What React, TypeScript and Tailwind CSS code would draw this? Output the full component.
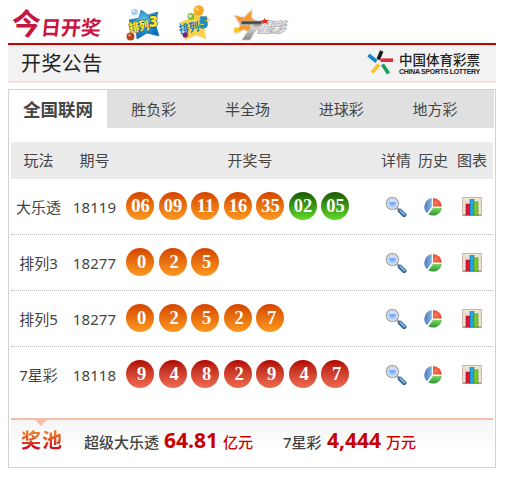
import React from 'react';

interface Draw {
  name: string;
  issue: string;
  balls: string[];
  color: 'orange' | 'red';
  extra?: string[];
}

const tabs = ['胜负彩', '半全场', '进球彩', '地方彩'];

const draws: Draw[] = [
  { name: '大乐透', issue: '18119', balls: ['06', '09', '11', '16', '35'], color: 'orange', extra: ['02', '05'] },
  { name: '排列3', issue: '18277', balls: ['0', '2', '5'], color: 'orange' },
  { name: '排列5', issue: '18277', balls: ['0', '2', '5', '2', '7'], color: 'orange' },
  { name: '7星彩', issue: '18118', balls: ['9', '4', '8', '2', '9', '4', '7'], color: 'red' },
];

const ballColors = {
  orange: 'from-[#d44300] to-[#fb991f]',
  green: 'from-[#1d5a06] to-[#5fdc28]',
  red: 'from-[#b00000] to-[#ef6a50]',
};

const columns = 'grid grid-cols-[55px_57px_254px_38px_36px_42px]';

function Ball({ value, color }: { value: string; color: keyof typeof ballColors }) {
  return (
    <span
      className={`flex h-7 w-7 items-center justify-center rounded-full bg-linear-to-b font-['Liberation_Serif',serif] text-[18.5px] leading-none font-bold text-white ${ballColors[color]} ${value.length === 1 ? 'pl-[3px]' : 'pl-px'}`}
    >
      {value}
    </span>
  );
}

function SearchIcon() {
  return (
    <svg width="22" height="22" viewBox="0 0 22 22">
      <defs>
        <radialGradient id="lens" cx="0.5" cy="0.5" r="0.5">
          <stop offset="0" stopColor="#8fbcff" />
          <stop offset="0.6" stopColor="#a9ccff" />
          <stop offset="1" stopColor="#dceaff" />
        </radialGradient>
      </defs>
      <path d="M11.5 11.5 L14.5 14.5" stroke="#9a9a9a" strokeWidth="2.2" />
      <path d="M15 14.8 L19.2 19" stroke="#2f608f" strokeWidth="4.4" strokeLinecap="round" />
      <path d="M15.2 14.4 L19.3 18.5" stroke="#7fb3e4" strokeWidth="2" strokeLinecap="round" />
      <circle cx="7.4" cy="7.4" r="6" fill="url(#lens)" stroke="#a3a3a3" strokeWidth="1.4" />
      <circle cx="7.4" cy="7.4" r="4.9" fill="none" stroke="#ececec" strokeWidth="0.8" />
      <path d="M4.8 7.6 H10" stroke="#6a9ff7" strokeWidth="1.6" />
      <path d="M5.2 5.2 Q7.5 3.9 9.6 5.2" stroke="#fff" strokeWidth="1" fill="none" />
    </svg>
  );
}

function PieIcon() {
  return (
    <svg width="20" height="20" viewBox="0 0 20 20">
      <defs>
        <linearGradient id="pieBlue" x1="0" y1="0" x2="1" y2="0">
          <stop offset="0" stopColor="#4a80b8" />
          <stop offset="1" stopColor="#86b5e2" />
        </linearGradient>
        <radialGradient id="pieRed" cx="0.3" cy="0.6" r="0.9">
          <stop offset="0" stopColor="#f97b58" />
          <stop offset="1" stopColor="#dd2f0f" />
        </radialGradient>
        <linearGradient id="pieGreen" x1="0" y1="0" x2="0" y2="1">
          <stop offset="0" stopColor="#7ad962" />
          <stop offset="1" stopColor="#2f9435" />
        </linearGradient>
      </defs>
      <path d="M8.8 1 A9 9 0 0 0 4 16.2 L8.8 9.8 Z" fill="url(#pieBlue)" />
      <path d="M10 1 A8.8 8.8 0 0 1 18.8 9.6 L10 9.6 Z" fill="url(#pieRed)" />
      <path d="M9.8 11 L18.8 11 A9 8.5 0 0 1 5.3 17.4 Z" fill="url(#pieGreen)" />
    </svg>
  );
}

function ChartIcon() {
  return (
    <svg width="20" height="19" viewBox="0 0 20 19">
      <rect x="0.5" y="0.5" width="19" height="18" fill="#eee4d5" stroke="#cbbba8" />
      <path d="M1 4.5 H19 M1 7.5 H19 M1 10.5 H19 M1 13.5 H19" stroke="#d9ccb9" strokeWidth="0.6" />
      <path d="M1 18 H19" stroke="#a89a8b" strokeWidth="1.6" />
      <rect x="4" y="7" width="4" height="11" fill="#de1832" stroke="#a20f22" strokeWidth="0.6" />
      <rect x="8" y="2.5" width="4" height="15.5" fill="#27a4dc" stroke="#1379aa" strokeWidth="0.6" />
      <rect x="12" y="5" width="4" height="13" fill="#7ac834" stroke="#4b9718" strokeWidth="0.6" />
    </svg>
  );
}

function Pailie3Logo() {
  return (
    <svg width="34" height="34" viewBox="0 0 34 34">
      <defs>
        <radialGradient id="blueStar" cx="0.5" cy="0.35" r="0.6">
          <stop offset="0" stopColor="#5cc4f2" />
          <stop offset="1" stopColor="#0869b4" />
        </radialGradient>
      </defs>
      <path
        d="M15 2 L22 7 L32 4 L29 15 L33 28 L21 25 L11 31 L10 21 L3 12 L13 10 Z"
        fill="url(#blueStar)"
        stroke="#1471b5"
        strokeWidth="0.7"
        strokeLinejoin="round"
      />
      <circle cx="8.5" cy="4" r="3.3" fill="#a5cfe6" />
      <circle cx="7.5" cy="3" r="1.2" fill="#e3f3fb" />
      <text
        x="3" y="23" fontSize="12" fontWeight="900" fill="#ffe626" stroke="#174b80" strokeWidth="1"
        paintOrder="stroke" transform="rotate(-10 12 18)" className="font-['Noto_Sans_CJK_SC',sans-serif]"
        textLength="20" lengthAdjust="spacingAndGlyphs"
      >
        排列
      </text>
      <text
        x="23" y="19" fontSize="15" fontWeight="900" fill="#ffe626" stroke="#174b80" strokeWidth="1.4"
        paintOrder="stroke" className="font-['Open_Sans',sans-serif]"
      >
        3
      </text>
      <circle cx="4.5" cy="28.5" r="4" fill="#b54323" />
      <circle cx="3.5" cy="27.2" r="1.5" fill="#e3845d" />
    </svg>
  );
}

function Pailie5Logo() {
  return (
    <svg width="34" height="38" viewBox="0 0 34 38">
      <path
        d="M19 6 L22 14 L32 15 L26 23 L28 35 L18 31 L7 36 L8 25 L1 19 L13 14 Z"
        fill="#fbd24c"
        stroke="#f3d98c"
        strokeWidth="0.8"
        strokeLinejoin="round"
      />
      <circle cx="20.7" cy="6.5" r="5.2" fill="#f8a922" />
      <circle cx="19" cy="4.9" r="2" fill="#fdcb65" />
      <circle cx="13" cy="12.5" r="3.4" fill="#7fbb42" />
      <circle cx="12.3" cy="12" r="1.6" fill="#dcefc2" />
      <text
        x="1" y="28" fontSize="11.5" fontWeight="700" fill="#0c78bd" transform="rotate(-10 12 24)"
        className="font-['Noto_Sans_CJK_SC',sans-serif]" textLength="20" lengthAdjust="spacingAndGlyphs"
      >
        排列
      </text>
      <text
        x="21" y="24" fontSize="15" fontWeight="900" fill="#1295d4" stroke="#124a82" strokeWidth="0.8"
        paintOrder="stroke" className="font-['Open_Sans',sans-serif]"
      >
        5
      </text>
      <circle cx="7.2" cy="31" r="2.7" fill="#7b2475" />
    </svg>
  );
}

function SevenStarLogo() {
  return (
    <svg width="64" height="36" viewBox="0 0 64 36">
      <defs>
        <linearGradient id="silver" x1="0" y1="0" x2="0" y2="1">
          <stop offset="0" stopColor="#454545" />
          <stop offset="0.35" stopColor="#d4d4d4" />
          <stop offset="1" stopColor="#868686" />
        </linearGradient>
      </defs>
      <path
        d="M20 2 L20 11 L26 14 L19 19 L20 27 L12 23 L3 27 L8 18 L2 8 L12 10 Z"
        fill="#f9982a"
        stroke="#e3e3e3"
        strokeWidth="1.2"
      />
      <circle cx="4.5" cy="23" r="2.8" fill="#ffc81d" />
      <path d="M9 14 L33 14 L28 19 Q22 25 18 33 L10 33 Q15 24 22 18 L8 18 Z" fill="url(#silver)" stroke="#c9c9c9" strokeWidth="0.8" />
      <path d="M10 14.5 L32 14.5 L30 16.5 L10 17 Z" fill="#4b4b4b" />
      <text
        x="27" y="25" fontSize="13" fontWeight="700" fill="#e6e6e6" stroke="#adadad" strokeWidth="1.8"
        paintOrder="stroke" transform="translate(6 0) skewX(-16)" className="font-['Noto_Sans_CJK_SC',sans-serif]"
        textLength="27" lengthAdjust="spacingAndGlyphs"
      >
        星彩
      </text>
      <path d="M32.5 11 L34 13.2 L37 12.5 L35 14.8 L36 17 L33 15.8 L30 17 L31 14.8 L29 13 L31.5 13.2 Z" fill="#e5261d" />
    </svg>
  );
}

function SportsLogo() {
  return (
    <svg width="26" height="26" viewBox="0 0 26 26" fill="none" strokeWidth="3.6">
      <path d="M14.7 1 L11.2 9.5" stroke="#1d1d1d" />
      <path d="M1.5 5 L9.5 11.5" stroke="#1587c9" />
      <path d="M13.5 10.2 H26" stroke="#e62a37" />
      <path d="M12 14.5 L5 22.5" stroke="#f6c51f" />
      <path d="M15.5 14.5 L21.5 23.5" stroke="#17a05b" />
    </svg>
  );
}

export default function App() {
  return (
    <div className="h-[478px] w-[507px] overflow-hidden bg-white pl-2 font-['Noto_Sans','Noto_Sans_CJK_SC',sans-serif] text-[15px] text-[#444]">
      <div className="w-[488px]">
        <div className="flex h-[43px] items-start">
          <div className="flex h-[43px] w-[118px] items-baseline pl-[4px] font-['Noto_Sans_CJK_SC',sans-serif] font-bold whitespace-nowrap text-[#c81440]">
            <span className="text-[29px] leading-[44px]">今</span>
            <span className="-skew-x-6 text-[20px]">日开奖</span>
          </div>
          <div className="pt-2">
            <Pailie3Logo />
          </div>
          <div className="ml-[18px] pt-[4px]">
            <Pailie5Logo />
          </div>
          <div className="ml-5 pt-[7px]">
            <SevenStarLogo />
          </div>
        </div>

        <div className="flex h-10 items-center justify-between border-t-2 border-b-2 border-t-[#c40000] border-b-[#fbdede] bg-[#f2f2f2] pr-[14px] pl-[13px]">
          <h2 className="font-['Noto_Sans_CJK_SC',sans-serif] text-[20px] leading-none tracking-[0.4px] text-[#222]">开奖公告</h2>
          <div className="flex items-center gap-[6px]">
            <SportsLogo />
            <div className="flex w-[83px] flex-col whitespace-nowrap text-[#222]">
              <span className="font-['Noto_Sans_CJK_SC',sans-serif] text-[13.5px] leading-[17px] font-medium">中国体育彩票</span>
              <span className="font-['Liberation_Sans',sans-serif] text-[7px] leading-[8px] font-bold tracking-[-0.3px]">CHINA SPORTS LOTTERY</span>
            </div>
          </div>
        </div>

        <div className="mt-[6px] h-[379px] border border-[#d2d2d2]">
          <div className="mr-px flex h-[38px] bg-[#e0e0e0] leading-[38px]">
            <div className="w-[98px] bg-white text-center text-[17.5px] font-bold">全国联网</div>
            {tabs.map(tab => (
              <div key={tab} className="w-[93.7px] text-center">{tab}</div>
            ))}
          </div>

          <div className="mt-[14px] ml-[2px] w-[482px]">
            <div className={`${columns} h-[37px] bg-[#ebebeb] text-center leading-[37px] whitespace-nowrap`}>
              <span>玩法</span>
              <span>期号</span>
              <span>开奖号</span>
              <span>详情</span>
              <span>历史</span>
              <span>图表</span>
            </div>

            {draws.map((draw, index) => (
              <div
                key={draw.name}
                className={`${columns} h-14 items-center border-b border-dotted text-center ${index < draws.length - 1 ? 'border-[#b5b9bf]' : 'border-transparent'}`}
              >
                <span className="pt-[2px] whitespace-nowrap">{draw.name}</span>
                <span className="pt-[2px] tracking-[0.15px]">{draw.issue}</span>
                <div className="-mt-px flex gap-[4.5px] pl-[3px]">
                  {draw.balls.map((ball, i) => (
                    <Ball key={i} value={ball} color={draw.color} />
                  ))}
                  {draw.extra?.map(ball => (
                    <Ball key={ball} value={ball} color="green" />
                  ))}
                </div>
                <span className="flex justify-center"><SearchIcon /></span>
                <span className="flex justify-center"><PieIcon /></span>
                <span className="flex justify-center"><ChartIcon /></span>
              </div>
            ))}

            <div className="relative mt-[15px] flex h-[46px] items-baseline border-t-2 border-[#f3bfab] bg-linear-to-b from-[#f5f5f5] to-white to-70% font-medium whitespace-nowrap">
              <svg className="absolute top-0 left-6" width="12" height="6" viewBox="0 0 12 6">
                <path d="M0 0 H12 L6 6 Z" fill="#f3bfab" />
              </svg>
              <span className="w-[73px] pl-[10px]">
                <b className="bg-linear-to-b from-[#ee7a26] from-25% to-[#cf1020] to-75% bg-clip-text font-['Noto_Sans_CJK_SC',sans-serif] text-[20px] leading-[39px] tracking-[1px] text-transparent">奖池</b>
              </span>
              <span className="w-[80px]">超级大乐透</span>
              <b className="w-[59px] text-[21px] leading-[39px] text-[#c80000]">64.81</b>
              <span className="w-[60px] text-[#c80000]">亿元</span>
              <span className="w-[44px]">7星彩</span>
              <b className="w-[59px] text-[21px] leading-[39px] text-[#c80000]">4,444</b>
              <span className="text-[#c80000]">万元</span>
            </div>
          </div>
        </div>
      </div>
    </div>
  );
}
